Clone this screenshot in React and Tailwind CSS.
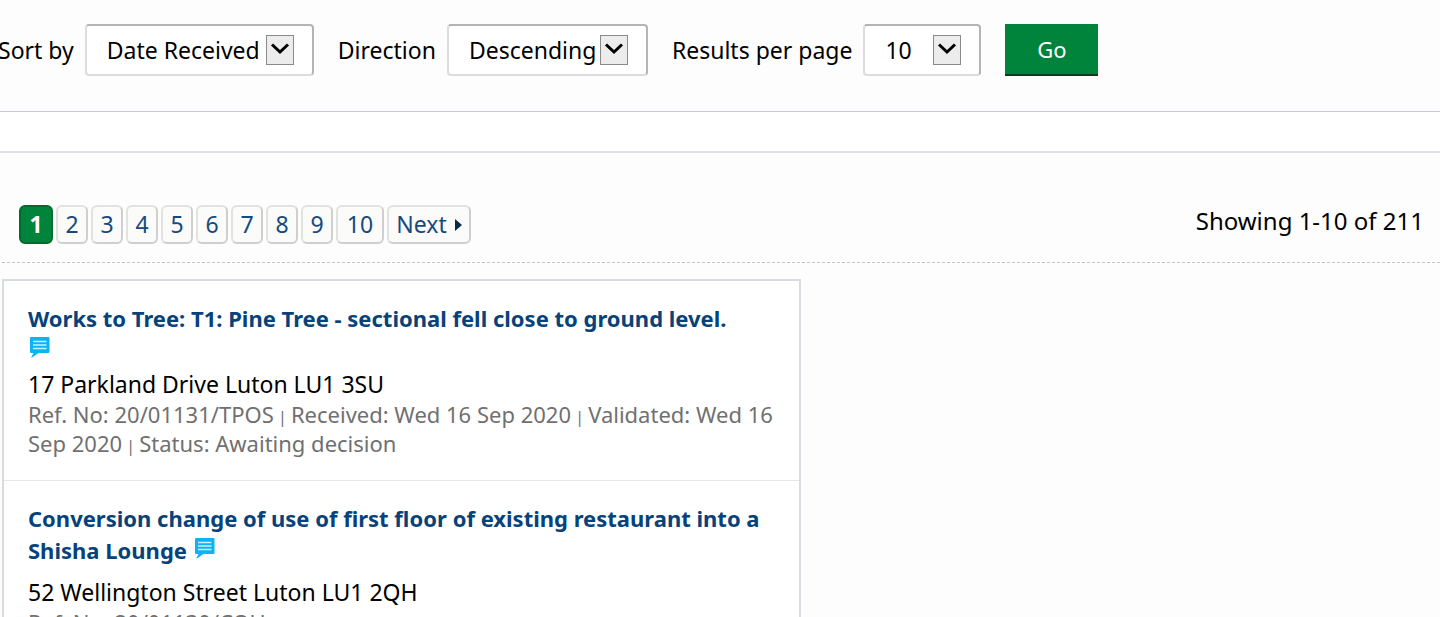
import { Fragment } from "react";

const pages = [2, 3, 4, 5, 6, 7, 8, 9];

const results = [
    {
        title: "Works to Tree: T1: Pine Tree - sectional fell close to ground level.",
        iconClass: "mt-[3px] ml-[2px] block",
        address: "17 Parkland Drive Luton LU1 3SU",
        meta: ["Ref. No: 20/01131/TPOS", "Received: Wed 16 Sep 2020", "Validated: Wed 16 Sep 2020", "Status: Awaiting decision"],
    },
    {
        title: "Conversion change of use of first floor of existing restaurant into a Shisha Lounge",
        iconClass: "ml-2 inline-block align-baseline",
        address: "52 Wellington Street Luton LU1 2QH",
        meta: ["Ref. No: 20/01130/COU"],
    },
];

function SelectField({ id, label, options, className }) {
    return (
        <div className="flex items-center gap-[11px]">
            <label htmlFor={id} className="whitespace-nowrap">
                {label}
            </label>
            <div className="relative">
                <select
                    id={id}
                    className={`block h-[52px] appearance-none rounded border-2 border-t-[#b4b4b4] border-r-[#b4b4b4] border-b-[#dcdcdc] border-l-[#dcdcdc] bg-white pl-5 ${className}`}
                >
                    {options.map((option) => (
                        <option key={option}>{option}</option>
                    ))}
                </select>
                <span className="pointer-events-none absolute top-[11px] right-5 flex h-[30px] w-[28px] items-start justify-center border border-[#8a8a8a] bg-[#ececec] pt-[6px]">
                    <svg width="20" height="14" viewBox="0 0 20 14" fill="none" stroke="#000" strokeWidth="3">
                        <path d="M2 2.500l8 7.500 8-7.500" />
                    </svg>
                </span>
            </div>
        </div>
    );
}

function CommentIcon({ className }) {
    return (
        <svg className={className} width="20" height="21" viewBox="0 0 20 21" aria-label="Open for comments">
            <path d="M1 0h17.500q1 0 1 1v14q0 1-1 1H8.500L2 20.500q-1 .3-.6-.6L3.500 16H1q-1 0-1-1V1q0-1 1-1z" fill="#0db4f5" />
            <path d="M3 4.500h13.500M3 8h13.500M3 11.500h13.500" stroke="#c9effd" strokeWidth="1.500" />
        </svg>
    );
}

function Pager() {
    const item = "flex h-[39px] items-center justify-center gap-2 rounded-md border-2 border-t-[#e2e2e2] border-r-[#cfcfcf] border-b-[#cfcfcf] border-l-[#e2e2e2] bg-[#fbfbf9] text-[#154a80]";

    return (
        <nav className="flex gap-[3px]" aria-label="Pagination">
            <strong className="flex h-[39px] w-[34px] items-center justify-center rounded-md border-2 border-[#006b2c] bg-[#00833b] text-white">
                1
            </strong>
            {pages.map((page) => (
                <a key={page} href={`#page-${page}`} className={`${item} w-8`}>
                    {page}
                </a>
            ))}
            <a href="#page-10" className={`${item} w-[48px]`}>
                10
            </a>
            <a href="#next" className={`${item} w-[84px]`}>
                Next
                <svg width="7" height="12" viewBox="0 0 7 12" fill="#0b2948">
                    <path d="M0 0l7 6-7 6z" />
                </svg>
            </a>
        </nav>
    );
}

function Result({ title, iconClass, address, meta }) {
    return (
        <li className="border-b border-[#e4e6e8] pt-[21px] pr-5 pb-[22px] pl-6">
            <h2 className="text-[22px] font-bold leading-8">
                <a href="#details" className="text-[#08427a]">
                    {title}
                </a>
                <CommentIcon className={iconClass} />
            </h2>
            <p className="mt-[10px] leading-8">{address}</p>
            <p className="text-[22px] leading-[29px] text-[#707070]">
                {meta.map((text, index) => (
                    <Fragment key={text}>
                        {index > 0 && <span className="text-base leading-none"> | </span>}
                        {text}
                    </Fragment>
                ))}
            </p>
        </li>
    );
}

export default function App() {
    return (
        <div className="h-screen overflow-hidden bg-[#fdfdfd] font-['Noto_Sans',sans-serif] text-[23px] text-black">
            <form className="-ml-[2px] flex items-center gap-6 border-b border-[#c8ccd2] pt-6 pb-[35px]">
                <SelectField id="sort" label="Sort by" options={["Date Received", "Address", "Status"]} className="w-[229px]" />
                <SelectField id="direction" label="Direction" options={["Descending", "Ascending"]} className="w-[201px]" />
                <SelectField id="per-page" label="Results per page" options={["10", "20", "50"]} className="w-[118px]" />
                <button type="button" className="h-[52px] w-[93px] border-b-2 border-[#00401d] bg-[#00833b] text-[22px] text-white">
                    Go
                </button>
            </form>
            <div className="h-[41px] border-b-2 border-[#dde1e5] bg-white" />

            <div className="ml-[2px] flex items-start justify-between border-b border-dashed border-[#c4c4c4] pt-[52px] pr-4 pb-[18px] pl-[17px]">
                <Pager />
                <p className="text-2xl leading-8">Showing 1-10 of 211</p>
            </div>

            <ul className="mt-4 ml-[2px] max-w-[799px] border-2 border-[#d8dbe0] bg-white">
                {results.map((result) => (
                    <Result key={result.title} {...result} />
                ))}
            </ul>
        </div>
    );
}
